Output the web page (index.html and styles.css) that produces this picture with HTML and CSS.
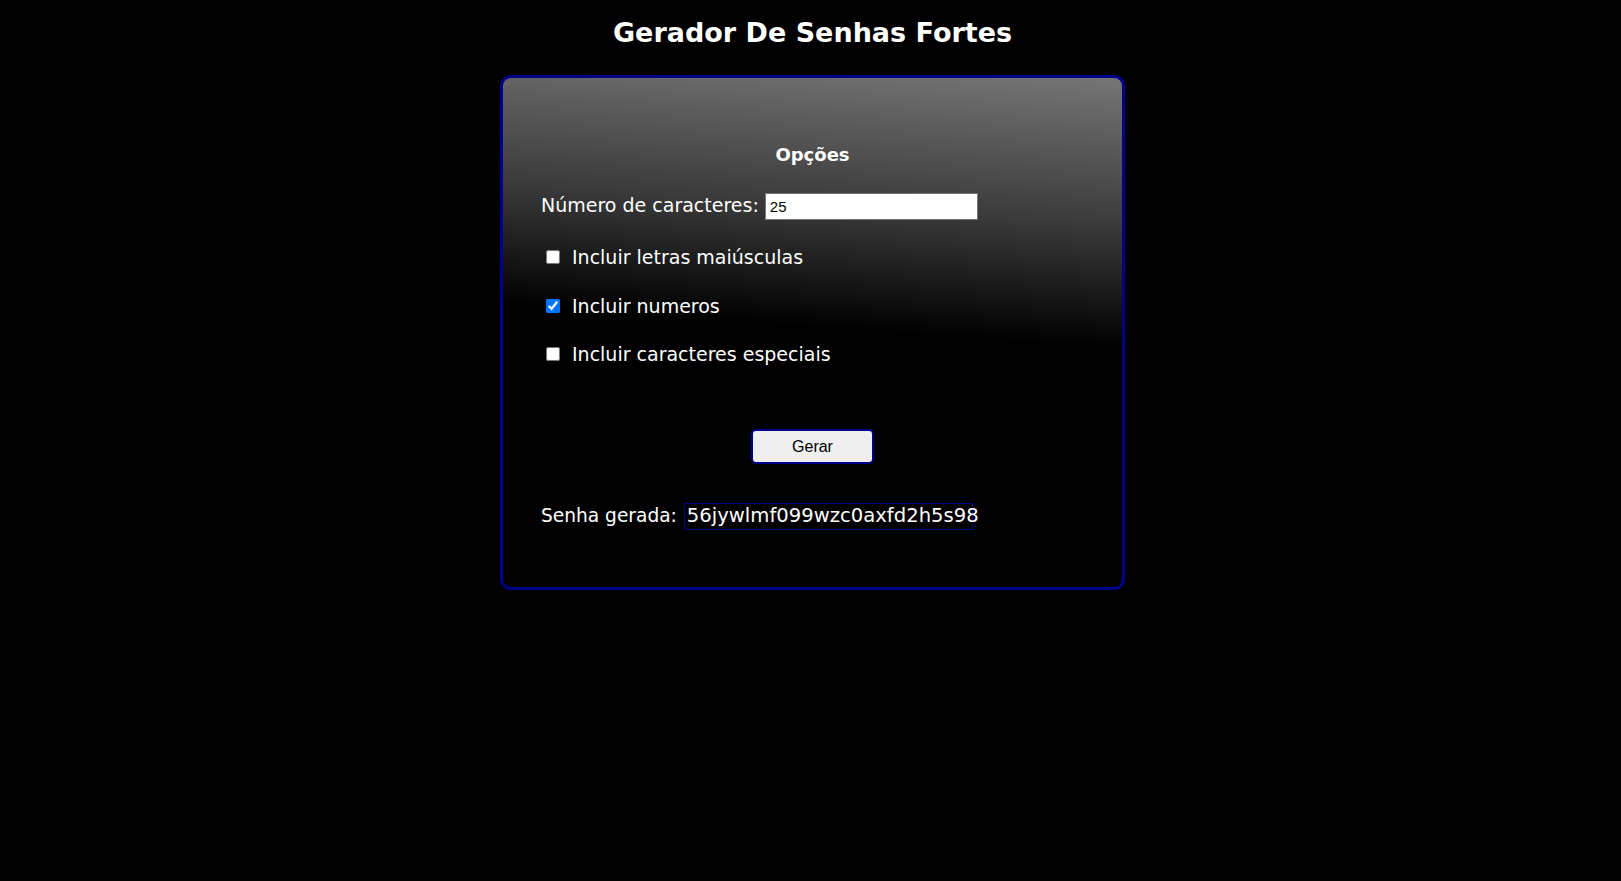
FILE: index.html
```html
<!DOCTYPE html>
<html lang="pt-BR">
<head>
<meta charset="utf-8">
<title>Gerador De Senhas Fortes</title>
<link rel="stylesheet" href="styles.css">
</head>
<body>
<h1 class="title">Gerador De Senhas Fortes</h1>
<div class="card">
  <h2 class="card-heading">Opções</h2>
  <div class="field-row">
    <label class="field-label" for="tamanho">Número de caracteres:</label>
    <input class="num-input" id="tamanho" type="text" value="25">
  </div>
  <label class="check-row"><input class="check" type="checkbox"><span>Incluir letras maiúsculas</span></label>
  <label class="check-row"><input class="check" type="checkbox" checked><span>Incluir numeros</span></label>
  <label class="check-row"><input class="check" type="checkbox"><span>Incluir caracteres especiais</span></label>
  <div class="btn-row"><button class="btn" type="button">Gerar</button></div>
  <div class="result-row">
    <span class="result-label">Senha gerada:</span>
    <span class="result-box">56jywlmf099wzc0axfd2h5s98</span>
  </div>
</div>
</body>
</html>
```
FILE: styles.css
```css
html, body {
  margin: 0;
  background: #000;
}
body {
  padding: 0 0 0 4px;
  color: #fff;
  font-family: "DejaVu Sans", "Liberation Sans", sans-serif;
}
.title {
  margin: 17px 0 26px;
  font-size: 27px;
  line-height: 32px;
  font-weight: bold;
  text-align: center;
}
.card {
  box-sizing: border-box;
  width: 625px;
  margin: 0 auto;
  border: 3px solid #00008b;
  border-radius: 11px;
  padding: 0 38px 57px;
  background: linear-gradient(184deg, #757575 0%, #3a3a3a 27%, #000 49%, #000 100%);
  font-size: 19px;
}
.card-heading {
  margin: 66px 0 27px;
  font-size: 18px;
  line-height: 22px;
  font-weight: bold;
  text-align: center;
}
.field-row {
  display: flex;
  align-items: center;
  height: 27px;
}
.field-label {
  margin-right: 6px;
  margin-bottom: 4px;
}
.num-input {
  box-sizing: border-box;
  width: 213px;
  height: 27px;
  margin: 0;
  padding: 1px 4px;
  border: 1px solid #767676;
  background: #fff;
  color: #000;
  font-family: "Liberation Sans", Arial, sans-serif;
  font-size: 15px;
}
.check-row {
  display: flex;
  align-items: center;
  height: 24px;
  margin-top: 24.5px;
}
.field-row + .check-row {
  margin-top: 25px;
}
.check {
  width: 14px;
  height: 14px;
  margin: 0 12px 0 5px;
}
.btn-row {
  display: flex;
  justify-content: center;
  margin-top: 63px;
}
.btn {
  box-sizing: border-box;
  width: 123px;
  height: 35px;
  border: 2px solid #00008b;
  border-radius: 5px;
  background: #efefef;
  color: #000;
  font-family: "Liberation Sans", Arial, sans-serif;
  font-size: 16px;
}
.result-row {
  display: flex;
  align-items: center;
  margin-top: 39px;
  height: 27px;
}
.result-label {
  margin-right: 7px;
  margin-bottom: 3px;
  font-size: 18.6px;
}
.result-box {
  box-sizing: border-box;
  width: 289px;
  height: 27px;
  padding-left: 2px;
  border: 1px solid #00008b;
  white-space: nowrap;
  line-height: 23px;
  font-size: 19.6px;
}
```
